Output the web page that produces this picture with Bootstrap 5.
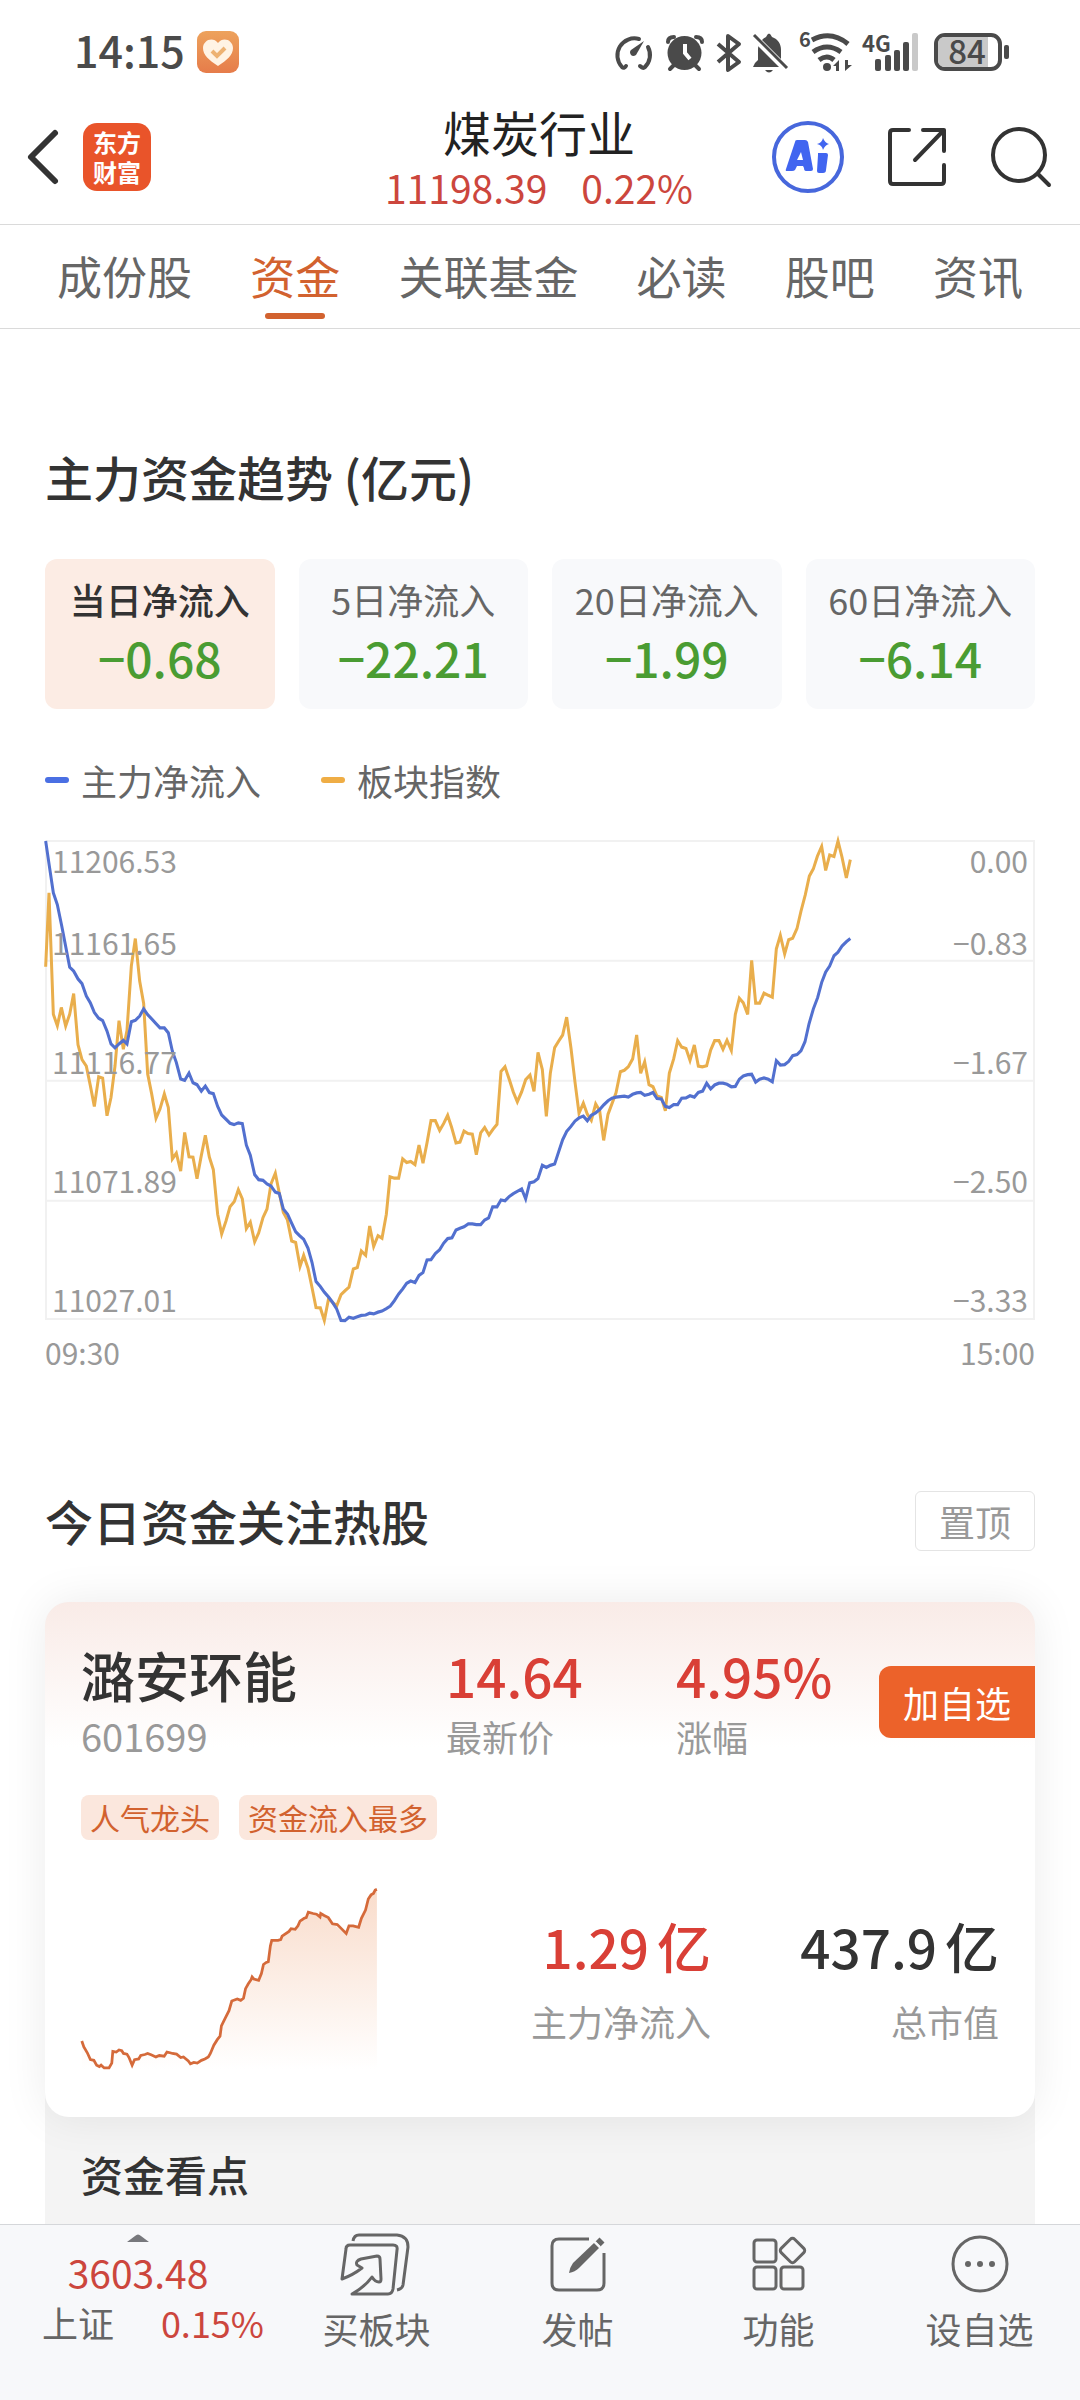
<!DOCTYPE html>
<html lang="zh-CN">
<head>
<meta charset="utf-8">
<meta name="viewport" content="width=device-width, initial-scale=1">
<title>煤炭行业 - 资金</title>
<link href="https://cdn.jsdelivr.net/npm/bootstrap@5.3.0/dist/css/bootstrap.min.css" rel="stylesheet">
<style>
  :root {
    --ink: #333333; --ink-2: #666666; --ink-3: #999999;
    --up: #cc463d; --up-strong: #d93f36; --down: #4a9c32; --brand: #d2622f;
  }
  body {
    font-family: "Noto Sans CJK SC", "Noto Sans", sans-serif;
    color: var(--ink); background: #fff; font-size: 36px; line-height: 44px;
  }
  button { font: inherit; }
  svg { display: block; flex: none; overflow: visible; }
  .c-2 { color: var(--ink-2); }
  .c-3 { color: var(--ink-3); }
  .c-up { color: var(--up); }
  .c-up-strong { color: var(--up-strong); }

  .status { height: 90px; padding: 13px 70px 0 74px; }
  .clock-row { gap: 12px; }
  .clock { font-size: 43px; font-weight: 500; color: #4a4a4a; padding-bottom: 5px; }

  .topbar { height: 135px; border-bottom: 1px solid #dadada; display: grid; grid-template-columns: 1fr auto 1fr; padding: 0 28px 0 26px; }
  .logo { width: 68px; height: 68px; border-radius: 14px; background: #e9542a; color: #fff; font-size: 24px; line-height: 30px; font-weight: 700; }
  .title-box { padding-top: 4px; }
  .title-box h1 { font-size: 48px; line-height: 56px; font-weight: 400; color: #222; }
  .title-box p { font-size: 39px; line-height: 56px; gap: 34px; }
  .tools { gap: 42px; }
  .bare { border: 0; background: none; padding: 0; }

  .tabs { height: 104px; border-bottom: 1px solid #dadada; padding: 0 57px; font-size: 45px; }
  .tabs a { color: var(--ink-2); text-decoration: none; padding-bottom: 2px; }
  .tabs a.active { color: var(--brand); position: relative; }
  .tabs a.active::after { content: ""; position: absolute; left: 50%; bottom: 9px; width: 60px; height: 6px; margin-left: -30px; border-radius: 3px; background: var(--brand); }

  .page { padding: 113px 45px 0; }
  h2 { font-size: 48px; line-height: 68px; font-weight: 500; margin: 0; }

  .tiles { gap: 24px; margin-top: 49px; }
  .tile { flex: 1 1 0; border: 0; border-radius: 12px; background: #f8f9fb; color: var(--ink-2); padding: 20px 0 22px; gap: 8px; line-height: 40px; }
  .tile.active { background: #fcece4; color: var(--ink); font-weight: 500; }
  .tile b { font-size: 48px; line-height: 60px; font-weight: 500; color: var(--down); }

  .legend-row { margin-top: 49px; gap: 60px; }
  .key { gap: 12px; }
  .key i { width: 24px; height: 6px; border-radius: 3px; }
  .key-main i { background: #4a6fe3; }
  .key-idx i { background: #efad45; }

  .chart { height: 480px; margin-top: 38px; border: 2px solid #f1f1f1; }
  .chart svg { position: absolute; left: -2px; top: -2px; width: calc(100% + 4px); height: 480px; }
  .band { flex: 1 1 0; padding: 0 5px 1px; position: relative; }
  .axis { font-size: 30px; line-height: 36px; color: var(--ink-3); }
  .times { margin-top: 12px; line-height: 40px; }

  .hot-head { margin-top: 119px; }
  .hot-head h2 { padding-bottom: 2px; }
  .btn-pin { width: 120px; height: 60px; border: 1px solid #e4e4e4; border-radius: 6px; color: var(--ink-3); }
  .stock { margin-top: 51px; position: relative; z-index: 1; border-radius: 24px; background: #fff linear-gradient(#f9ebe7, #fff 145px) no-repeat; box-shadow: 0 0 45px rgba(0, 0, 0, .08); padding: 43px 0 47px 36px; }
  .quote { display: grid; grid-template-columns: 365fr 230fr 359fr; }
  .fig { font-size: 54px; line-height: 60px; font-weight: 500; }
  .num { font-size: 53px; }
  .code { font-size: 38px; }
  .gap-line { row-gap: 9px; }
  .btn-add { width: 156px; height: 72px; border-radius: 12px 0 0 12px; background: #ec622a; color: #fff; }
  .chips { margin-top: 37px; gap: 20px; }
  .chip { font-size: 30px; line-height: 45px; padding: 0 9px; border-radius: 8px; background: #fbe7dd; color: var(--brand); }
  .flow { display: grid; grid-template-columns: 296px 334fr 288fr; margin-top: 49px; padding-right: 36px; }
  .flow > div { row-gap: 23px; }
  .unit { margin-left: 8px; font-size: 54px; }
  .notes { margin-top: -24px; padding: 51px 36px 12px; background: #f4f4f4; }
  h3 { font-size: 42px; line-height: 60px; font-weight: 500; margin: 0; }

  .dock { flex: none; z-index: 2; height: 176px; background: #f7f8fa; border-top: 1px solid #d5d7da; display: grid; grid-template-columns: 276fr 201fr 201fr 201fr 201fr; }
  .dock a { text-decoration: none; }
  .dock .idx { padding-top: 9px; line-height: 50px; }
  .idx-val { font-size: 39px; line-height: 50px; margin-top: 5px; }
  .idx-row { padding: 0 12px 0 42px; }
  .dock .item { padding-top: 7px; gap: 10px; color: var(--ink-2); }
</style>
</head>
<body class="min-vh-100 d-flex flex-column">

<div class="status d-flex align-items-center justify-content-between">
  <div class="clock-row d-flex align-items-center">
    <span class="clock">14:15</span>
    <svg width="42" height="42" viewBox="0 0 42 42" aria-hidden="true">
      <defs><linearGradient id="heartBg" x2="0" y2="1"><stop stop-color="#eda25c"/><stop offset="1" stop-color="#e67c4a"/></linearGradient></defs>
      <rect width="42" height="42" rx="9" fill="url(#heartBg)"/>
      <path d="M21 35C12 29 6 24 6 17c0-8 10-12 15-5 5-7 15-3 15 5 0 7-6 12-15 18z" fill="#fff3e4"/>
      <path d="M15 20l5 5 8-8" fill="none" stroke="#edb273" stroke-width="4"/>
    </svg>
  </div>
  <svg width="398" height="46" viewBox="612 28 398 46" role="img" aria-label="状态图标" font-family="Noto Sans CJK SC, sans-serif">
    <g fill="none" stroke="#4a4a4a" stroke-width="4" stroke-linecap="round">
      <path d="M626 65q-2 3-4 1A17 17 0 0 1 639 38M648 46a17 17 0 0 1-3 20q-2 2-5-1"/>
      <path d="M668 41q0-5 6-5M702 41q0-5-6-5M674 64l-4 4M695 64l4 4"/>
    </g>
    <path d="M644 40l-8 14q-3 2-5 0-2-3 0-5z" fill="#4a4a4a"/>
    <circle cx="684.500" cy="52" r="17" fill="#4a4a4a"/>
    <path d="M685 43v9l5 6" fill="none" stroke="#fff" stroke-width="4"/>
    <path d="M718 43l21 18-11 8V35l11 8-21 18" fill="none" stroke="#4a4a4a" stroke-width="4" stroke-linejoin="round"/>
    <path d="M753 66q2-5 5-7V49c0-7 4-11 8-13q3-7 6 0c6 2 9 7 9 13v10q3 2 4 7zM765 69h8q-4 5-8 0z" fill="#4a4a4a"/>
    <path d="M754 36l34 34" stroke="#fff" stroke-width="7"/>
    <path d="M754 34l33 33" stroke="#4a4a4a" stroke-width="3"/>
    <text x="799" y="46" font-size="20" font-weight="700" fill="#4a4a4a">6</text>
    <g fill="none" stroke="#4a4a4a" stroke-width="5">
      <path d="M812 39q19-10 36 4M813 51q14-10 28 0M819 59q8-6 15 0"/>
    </g>
    <circle cx="827" cy="66" r="4" fill="#4a4a4a"/>
    <path d="M833 65l6-6v11h-3v-5zM852 64l-7 6V59h3v5z" fill="#4a4a4a"/>
    <text x="862" y="51" font-size="22" font-weight="700" fill="#4a4a4a">4G</text>
    <g fill="#4a4a4a">
      <rect x="875" y="58" width="6" height="12" rx="2"/><rect x="885" y="54" width="6" height="16" rx="2"/>
      <rect x="894" y="49" width="6" height="21" rx="2"/><rect x="903" y="41" width="6" height="29" rx="2"/>
      <rect x="912" y="32" width="6" height="38" rx="2" fill="#c9c9c9"/>
      <rect x="1004" y="44" width="5" height="14" rx="2"/>
    </g>
    <rect x="936" y="34" width="64" height="34" rx="9" fill="#fff" stroke="#4a4a4a" stroke-width="4"/>
    <path d="M945 36h43v30h-43q-7 0-7-7V43q0-7 7-7z" fill="#c9c9c9"/>
    <text x="967" y="63" font-size="33" font-weight="500" text-anchor="middle" fill="#4a4a4a">84</text>
  </svg>
</div>

<header class="topbar align-items-center">
  <div class="d-flex align-items-center gap-4">
    <button class="bare" type="button" aria-label="返回">
      <svg width="33" height="58" viewBox="0 0 33 58" fill="none" stroke="#333" stroke-width="6" stroke-linecap="round" stroke-linejoin="round"><path d="M29 5L5 29l24 24"/></svg>
    </button>
    <div class="logo d-flex flex-column align-items-center justify-content-center"><span>东方</span><span>财富</span></div>
  </div>
  <div class="title-box text-center">
    <h1 class="m-0">煤炭行业</h1>
    <p class="m-0 d-flex c-up"><span>11198.39</span><span>0.22%</span></p>
  </div>
  <div class="tools d-flex align-items-center justify-content-end">
    <button class="bare" type="button" aria-label="AI 助手">
      <svg width="72" height="74" viewBox="0 0 72 74"><circle cx="36" cy="37" r="34" fill="none" stroke="#4767dc" stroke-width="4"/>
        <path d="M25 20h8q2 0 3 2l5 27q0 2-2 2h-5q-2 0-2-3l-1-2h-6l-2 4q-1 1-3 1h-5q-2 0-1-2l9-27q0-2 2-2zM29 32l-4 8h6zM46 33h8q2 0 2 2l-2 15q0 3-3 3h-4q-2 0-2-2l1-16zM51 18q2 5 6 6-4 1-6 6-1-5-6-6 5-1 6-6z" fill="#4165f0" fill-rule="evenodd"/></svg>
    </button>
    <button class="bare" type="button" aria-label="分享">
      <svg width="62" height="62" viewBox="0 0 62 62" fill="none" stroke="#333" stroke-width="4" stroke-linecap="round" stroke-linejoin="round"><path d="M23 4H7q-3 0-3 3v48q0 3 3 3h48q3 0 3-3V39M37 4h21v21M58 4L29 34"/></svg>
    </button>
    <button class="bare" type="button" aria-label="搜索">
      <svg width="62" height="62" viewBox="0 0 62 62" fill="none" stroke="#333" stroke-width="4" stroke-linecap="round"><circle cx="29" cy="29" r="26"/><path d="M48 48l11 11"/></svg>
    </button>
  </div>
</header>

<nav class="tabs d-flex justify-content-between align-items-stretch">
  <a href="#" class="d-flex align-items-center">成份股</a>
  <a href="#" class="d-flex align-items-center active" aria-current="page">资金</a>
  <a href="#" class="d-flex align-items-center">关联基金</a>
  <a href="#" class="d-flex align-items-center">必读</a>
  <a href="#" class="d-flex align-items-center">股吧</a>
  <a href="#" class="d-flex align-items-center">资讯</a>
</nav>

<main class="page flex-grow-1 d-flex flex-column">
  <section>
    <h2>主力资金趋势 (亿元)</h2>
    <div class="tiles d-flex">
      <button type="button" class="tile active d-flex flex-column align-items-center"><span>当日净流入</span><b>−0.68</b></button>
      <button type="button" class="tile d-flex flex-column align-items-center"><span>5日净流入</span><b>−22.21</b></button>
      <button type="button" class="tile d-flex flex-column align-items-center"><span>20日净流入</span><b>−1.99</b></button>
      <button type="button" class="tile d-flex flex-column align-items-center"><span>60日净流入</span><b>−6.14</b></button>
    </div>
    <div class="legend-row d-flex c-2">
      <span class="key key-main d-flex align-items-center"><i></i>主力净流入</span>
      <span class="key key-idx d-flex align-items-center"><i></i>板块指数</span>
    </div>
    <div class="chart position-relative d-flex flex-column">
      <svg viewBox="45 57 2970 1344" preserveAspectRatio="none" fill="none" stroke-width="9" aria-hidden="true">
        <path d="M45 395H3015M45 731H3015M45 1067H3015" stroke="#f1f1f1" stroke-width="6"/>
        <polyline stroke="#e9ae4c" points="47,412 57,205 70,545 82,577 94,526 107,578 119,545 131,487 144,630 156,672 169,690 181,745 193,803 206,720 218,724 231,829 243,778 255,690 267,563 280,643 291,590 304,410 316,333 329,452 341,515 353,712 365,768 378,836 390,810 403,768 415,806 427,950 439,934 452,984 464,876 477,944 489,945 501,1005 513,945 526,884 538,945 550,980 563,1105 575,1160 588,1124 600,1084 613,1069 625,1036 637,1062 649,1145 661,1127 674,1182 686,1157 699,1114 711,1090 723,1020 736,990 748,1046 760,1100 772,1120 785,1180 797,1184 810,1251 821,1220 834,1256 846,1310 858,1366 871,1367 883,1402 896,1340 908,1352 920,1362 933,1330 945,1319 957,1309 970,1258 982,1254 994,1208 1007,1220 1019,1138 1031,1195 1044,1165 1056,1172 1069,1105 1080,1000 1093,1004 1106,1004 1118,950 1130,960 1142,957 1155,966 1167,911 1179,962 1191,905 1203,843 1216,843 1229,870 1241,851 1253,828 1265,862 1278,905 1290,903 1302,872 1314,879 1327,881 1339,938 1352,877 1364,862 1377,883 1389,867 1401,853 1413,705 1425,692 1438,728 1450,763 1462,790 1475,762 1487,728 1500,715 1512,761 1524,652 1537,700 1549,831 1561,710 1574,638 1586,620 1598,603 1610,553 1623,640 1635,735 1647,822 1660,794 1672,825 1684,842 1697,796 1709,815 1721,898 1734,825 1746,795 1758,765 1771,706 1783,702 1795,692 1808,670 1820,603 1832,710 1844,678 1857,742 1869,748 1881,774 1894,778 1906,815 1918,710 1931,670 1943,619 1955,637 1968,641 1980,674 1993,631 2005,690 2017,692 2030,689 2042,645 2054,619 2067,619 2079,643 2091,618 2104,646 2116,545 2128,500 2140,513 2153,545 2165,394 2177,514 2189,514 2202,486 2215,492 2227,497 2239,362 2251,324 2264,376 2276,336 2288,332 2301,305 2313,256 2326,210 2338,158 2350,138 2362,103 2375,75 2387,142 2399,99 2412,103 2424,60 2436,105 2449,163 2461,112"/>
        <polyline stroke="#5270cf" points="47,60 58,130 70,205 82,238 95,297 119,413 131,424 144,446 156,459 169,494 181,513 193,540 206,556 218,563 231,592 243,628 255,639 267,628 280,618 291,628 304,566 316,562 329,550 341,530 353,546 365,558 378,571 390,583 403,583 415,597 427,648 439,680 452,726 464,730 477,710 489,737 501,742 514,760 526,746 538,764 550,767 563,803 575,827 588,839 600,850 612,854 625,849 637,851 649,911 661,940 674,994 686,1008 699,1010 711,1020 723,1026 736,1043 748,1047 760,1090 773,1105 785,1130 797,1154 809,1165 821,1175 834,1200 846,1240 858,1293 871,1307 883,1323 896,1337 908,1352 920,1370 933,1402 945,1403 957,1393 970,1396 982,1392 994,1388 1007,1387 1019,1382 1031,1384 1044,1379 1056,1376 1069,1369 1081,1362 1093,1347 1106,1328 1118,1314 1130,1298 1142,1292 1155,1296 1167,1276 1179,1268 1191,1233 1203,1232 1216,1215 1229,1204 1241,1186 1253,1173 1266,1171 1278,1149 1290,1144 1302,1140 1315,1132 1327,1132 1339,1134 1352,1134 1364,1121 1376,1115 1388,1084 1401,1084 1413,1065 1425,1067 1438,1055 1450,1047 1475,1034 1487,1062 1499,1017 1512,1014 1524,1005 1537,968 1549,974 1561,968 1574,964 1586,930 1598,896 1610,873 1622,860 1635,844 1647,835 1660,830 1672,843 1684,828 1697,821 1709,812 1721,799 1734,787 1746,780 1758,777 1783,774 1795,777 1808,769 1820,765 1832,764 1844,772 1857,769 1869,764 1881,781 1894,782 1906,803 1918,806 1931,798 1943,798 1955,780 1968,779 1980,773 1993,777 2005,764 2018,760 2030,738 2042,754 2054,743 2067,738 2079,738 2091,741 2104,748 2116,747 2128,727 2140,718 2153,714 2165,713 2177,735 2189,727 2202,723 2215,727 2227,734 2239,675 2251,687 2264,686 2276,677 2288,661 2301,658 2313,647 2325,622 2337,572 2350,530 2363,498 2375,456 2387,427 2399,410 2412,381 2424,371 2436,354 2449,342 2461,333"/>
      </svg>
      <div class="band axis d-flex flex-column justify-content-between">
        <div class="d-flex justify-content-between"><span>11206.53</span><span>0.00</span></div>
        <div class="d-flex justify-content-between"><span>11161.65</span><span>−0.83</span></div>
      </div>
      <div class="band axis d-flex justify-content-between align-items-end"><span>11116.77</span><span>−1.67</span></div>
      <div class="band axis d-flex justify-content-between align-items-end"><span>11071.89</span><span>−2.50</span></div>
      <div class="band axis d-flex justify-content-between align-items-end"><span>11027.01</span><span>−3.33</span></div>
    </div>
    <div class="axis times d-flex justify-content-between"><span>09:30</span><span>15:00</span></div>
  </section>

  <section class="flex-grow-1 d-flex flex-column">
    <div class="hot-head d-flex align-items-center justify-content-between">
      <h2 class="lh-1">今日资金关注热股</h2>
      <button type="button" class="btn-pin bg-white p-0">置顶</button>
    </div>
    <article class="stock">
      <div class="quote">
        <div class="d-grid gap-line"><span class="fig">潞安环能</span><span class="code c-3">601699</span></div>
        <div class="d-grid gap-line"><span class="fig num c-up-strong">14.64</span><span class="c-3">最新价</span></div>
        <div class="d-flex justify-content-between align-items-center">
          <div class="d-grid gap-line"><span class="fig num c-up-strong">4.95%</span><span class="c-3">涨幅</span></div>
          <button type="button" class="btn-add border-0 p-0">加自选</button>
        </div>
      </div>
      <div class="chips d-flex"><span class="chip">人气龙头</span><span class="chip">资金流入最多</span></div>
      <div class="flow align-items-center">
        <svg width="296" height="181" viewBox="235 85 858 525" aria-hidden="true">
          <defs><linearGradient id="area" x2="0" y2="1"><stop stop-color="#f9dccb"/><stop offset="1" stop-color="#fff"/></linearGradient></defs>
          <path fill="url(#area)" d="M237,526 262,580 302,604 324,590 327,556 353,554 383,596 402,578 428,562 452,572 493,560 552,592 604,572 638,512 642,482 664,438 672,410 706,402 712,374 731,340 750,350 764,304 778,296 788,234 814,232 844,200 856,202 882,170 894,152 940,162 964,186 1004,214 1012,192 1040,196 1068,114 1093,86V608H237z"/>
          <polyline fill="none" stroke="#d56a3a" stroke-width="8" points="237,526 243,543 253,560 262,580 272,582 280,596 288,600 293,596 302,604 316,604 324,590 327,556 337,558 345,552 353,554 358,562 368,564 374,574 383,596 390,580 402,578 408,568 420,565 428,562 438,566 452,572 462,568 476,570 484,558 493,560 500,562 512,564 524,574 532,572 546,584 552,592 562,588 572,590 584,582 594,578 604,572 610,562 620,538 630,522 638,512 642,482 652,462 664,438 672,410 688,404 698,408 706,402 712,374 720,360 728,348 731,340 736,346 750,350 758,330 764,304 772,298 778,296 784,250 788,234 806,234 814,232 818,222 838,208 844,200 856,202 864,192 870,178 882,170 888,168 894,152 908,156 918,158 928,166 930,156 940,162 952,168 964,186 978,188 990,200 1004,214 1012,192 1024,192 1040,196 1048,170 1060,146 1068,114 1076,102 1083,98 1088,88 1093,86"/>
        </svg>
        <div class="d-grid text-end"><span class="fig num c-up-strong">1.29<span class="unit">亿</span></span><span class="c-3">主力净流入</span></div>
        <div class="d-grid text-end"><span class="fig num">437.9<span class="unit">亿</span></span><span class="c-3">总市值</span></div>
      </div>
    </article>
    <div class="notes flex-grow-1"><h3>资金看点</h3></div>
  </section>
</main>

<nav class="dock sticky-bottom">
  <a href="#" class="idx c-up d-flex flex-column">
    <svg class="mx-auto" width="22" height="8" viewBox="0 0 22 8"><path d="M0 8L8 2q3-3 6 0l8 6z" fill="#77787c"/></svg>
    <span class="idx-val text-center">3603.48</span>
    <span class="idx-row d-flex justify-content-between"><span class="c-2">上证</span><span>0.15%</span></span>
  </a>
  <a href="#" class="item d-flex flex-column align-items-center">
    <svg width="76" height="64" viewBox="0 0 76 64" fill="none" stroke="#666" stroke-width="3" stroke-linejoin="round"><path d="M14 9q1-6 6-6h38q11 1 11 12l-5 38q-1 4-6 5"/><path d="M3 47L7 17q0-4 4-4h43q5 0 4 5l-4 39q-1 5-5 5H13c9-5 15-10 20-17q3 5 7 5 2 0 2-3l-1-20q0-3-3-3l-16 3q-6 2-4 6l5 3Q14 43 3 47z"/></svg>
    买板块
  </a>
  <a href="#" class="item d-flex flex-column align-items-center">
    <svg width="64" height="64" viewBox="0 0 64 64" fill="none" stroke="#666" stroke-width="3"><path d="M43 7H13q-7 0-7 7v37q0 7 7 7h38q7 0 7-7V21"/><path d="M27 31l21-20 5 5-20 20q-4 4-10 5 1-6 4-10z" fill="#666" stroke="none"/><path d="M52 12l4-4" stroke-width="7"/><path d="M49 10l5 5" stroke="#f7f8fa" stroke-width="2"/></svg>
    发帖
  </a>
  <a href="#" class="item d-flex flex-column align-items-center">
    <svg width="64" height="64" viewBox="0 0 64 64" fill="none" stroke="#666" stroke-width="3"><rect x="7" y="8" width="22" height="22" rx="3"/><rect x="7" y="35" width="22" height="22" rx="3"/><rect x="34" y="35" width="22" height="22" rx="3"/><rect x="36" y="9" width="19" height="19" rx="3" transform="rotate(45 45.500 18.500)"/></svg>
    功能
  </a>
  <a href="#" class="item d-flex flex-column align-items-center">
    <svg width="64" height="64" viewBox="0 0 64 64"><circle cx="32" cy="32" r="27" fill="none" stroke="#666" stroke-width="3"/><g fill="#666"><circle cx="20" cy="32" r="3"/><circle cx="32" cy="32" r="3"/><circle cx="44" cy="32" r="3"/></g></svg>
    设自选
  </a>
</nav>

<script src="https://cdn.jsdelivr.net/npm/bootstrap@5.3.0/dist/js/bootstrap.bundle.min.js"></script>
</body>
</html>
